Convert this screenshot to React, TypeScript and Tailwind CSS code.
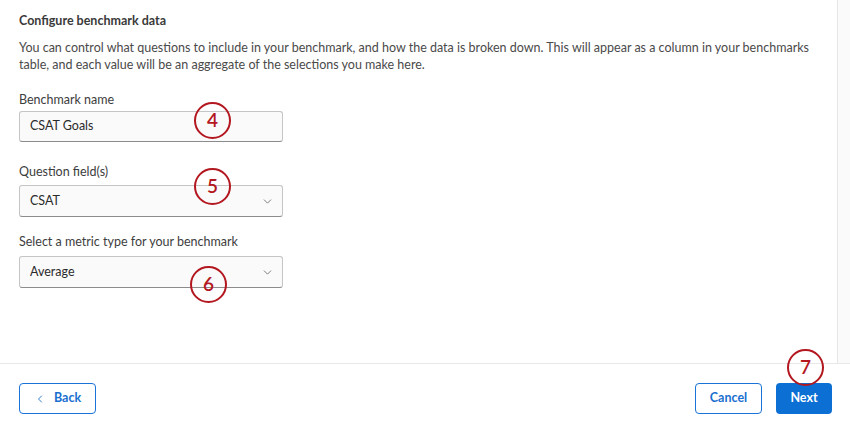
import { ChevronDown, ChevronLeft } from "lucide-react";
import type { ReactNode } from "react";

function Marker({ n, className }: { n: number; className: string }) {
  return (
    <div
      className={
        "absolute flex h-[37px] w-[37px] items-center justify-center rounded-full border-[2.5px] border-[#b3171f] text-[19px] font-semibold text-[#b3171f] " +
        className
      }
    >
      {n}
    </div>
  );
}

function Field({ label, className, children }: { label: string; className: string; children: ReactNode }) {
  return (
    <div className={"flex flex-col " + className}>
      <label className="text-[12.5px] leading-[17px] text-[#3d3d3d]">{label}</label>
      {children}
    </div>
  );
}

function Select({ value }: { value: string }) {
  return (
    <div className="flex h-[32px] w-[264px] items-center justify-between rounded-[3px] border border-[#c5c5c5] border-b-[#8c8c8c] bg-[#fafafa] pl-[10px] pr-[8px] text-[12.5px] text-[#2b2b2b]">
      <span>{value}</span>
      <ChevronDown size={13} strokeWidth={1.6} className="text-[#6b6b6b]" />
    </div>
  );
}

export default function App() {
  return (
    <div className="relative flex h-[427px] w-[850px] flex-col overflow-hidden bg-white font-['Lato',sans-serif]">
      <div className="flex flex-1">
        <main className="flex flex-1 flex-col pl-[19px] pr-[20px] pt-[12px]">
          <h2 className="text-[12.5px] font-bold leading-[17px] text-[#3a3a3a]">Configure benchmark data</h2>
          <p className="mt-[10px] text-[12.5px] leading-[17px] text-[#4a4a4a]">
            You can control what questions to include in your benchmark, and how the data is broken down. This will appear as a column in your benchmarks table, and each value will be an aggregate of the selections you make here.
          </p>
          <Field label="Benchmark name" className="mt-[18px] gap-[3px]">
            <div className="flex h-[31px] w-[264px] items-center rounded-[3px] border border-[#c5c5c5] border-b-[#8c8c8c] bg-[#fafafa] pl-[10px] text-[12.5px] text-[#2b2b2b]">
              CSAT Goals
            </div>
          </Field>
          <Field label="Question field(s)" className="mt-[21px] gap-[5px]">
            <Select value="CSAT" />
          </Field>
          <Field label="Select a metric type for your benchmark" className="mt-[16px] gap-[6px]">
            <Select value="Average" />
          </Field>
        </main>
        <div className="w-[13px] border-l border-[#e6e6e6] bg-[#fafafa]" />
      </div>
      <footer className="flex h-[64px] items-start justify-between border-t border-[#e8e8e8] pl-[19px] pr-[18px] pt-[19px]">
        <button className="flex h-[31px] w-[77px] items-center justify-center gap-[8px] rounded-[4px] border border-[#1a73d6] text-[12.5px] font-bold text-[#1a6fd0]">
          <ChevronLeft size={12} strokeWidth={1.8} />
          Back
        </button>
        <div className="flex gap-[14px]">
          <button className="flex h-[31px] w-[67px] items-center justify-center rounded-[4px] border border-[#1a73d6] text-[12.5px] font-bold text-[#1a6fd0]">
            Cancel
          </button>
          <button className="flex h-[31px] w-[56px] items-center justify-center rounded-[4px] bg-[#0b6fd4] text-[12.5px] font-bold text-white">
            Next
          </button>
        </div>
      </footer>
      <Marker n={4} className="left-[194px] top-[102px]" />
      <Marker n={5} className="left-[194px] top-[168px]" />
      <Marker n={6} className="left-[190px] top-[266px]" />
      <Marker n={7} className="left-[787px] top-[349px]" />
    </div>
  );
}
